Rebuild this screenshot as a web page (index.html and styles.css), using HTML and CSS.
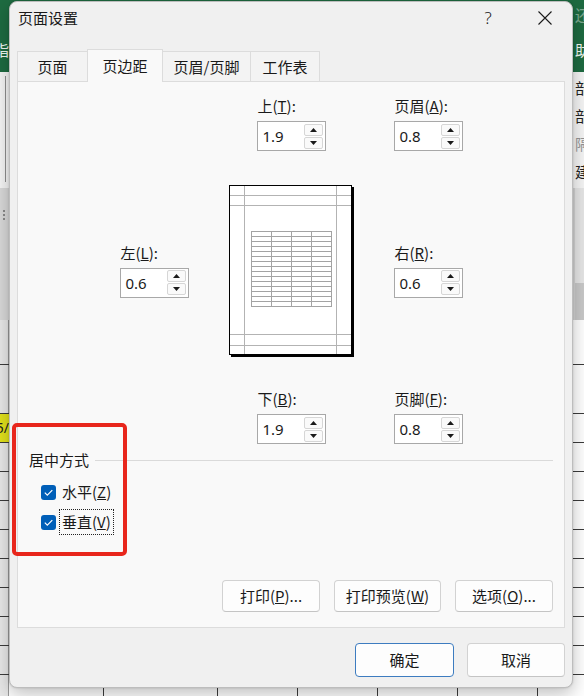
FILE: index.html
```html
<!DOCTYPE html>
<html lang="zh-CN">
<head>
<meta charset="utf-8">
<title>页面设置</title>
<link rel="stylesheet" href="styles.css">
</head>
<body>
<div class="desk">
  <div class="ribbon">
    <div class="edge edge-left"><span>指</span></div>
    <div class="edge edge-right"><span class="faint">还</span><span>助</span></div>
  </div>
  <div class="toolbar">
    <div class="edge edge-left"><div class="tb-line"></div></div>
    <div class="edge edge-right"><span>部</span><span>部</span><span class="faint">隔</span><span>建</span></div>
  </div>
  <div class="pane">
    <div class="edge edge-left"><div class="grip"><i></i><i></i><i></i></div></div>
    <div class="edge edge-right pane-right"></div>
  </div>
  <div class="sheet">
    <div class="row row-head"></div>
    <div class="row row-tall"></div>
    <div class="row row-hl"><div class="hl-cell"><span>5/</span></div></div>
    <div class="row"></div>
    <div class="row"></div>
    <div class="row"></div>
    <div class="row"></div>
    <div class="row"></div>
    <div class="row"></div>
    <div class="row"></div>
    <div class="row"></div>
    <div class="row"></div>
  </div>

  <div class="dialog">
    <div class="titlebar">
      <div class="title">页面设置</div>
      <div class="tb-btns">
        <div class="tb-btn help">?</div>
        <div class="tb-btn">
          <svg width="14" height="14" viewBox="0 0 14 14"><path d="M0.5 0.5L13.5 13.5M13.5 0.5L0.5 13.5" stroke="#1a1a1a" stroke-width="1.1" fill="none"/></svg>
        </div>
      </div>
    </div>

    <div class="tabs">
      <div class="tab tab-first">页面</div>
      <div class="tab tab-active">页边距</div>
      <div class="tab">页眉/页脚</div>
      <div class="tab">工作表</div>
    </div>

    <div class="panel">
      <div class="margins">
        <div class="field m-top">
          <div class="field-label">上(<u>T</u>):</div>
          <div class="spin"><span class="spin-val">1.9</span><span class="spin-btns"><span class="spin-btn"><svg width="7" height="4" viewBox="0 0 7 4"><path d="M0 4L3.5 0L7 4Z" fill="#1a1a1a"/></svg></span><span class="spin-btn"><svg width="7" height="4" viewBox="0 0 7 4"><path d="M0 0L7 0L3.5 4Z" fill="#1a1a1a"/></svg></span></span></div>
        </div>
        <div class="field m-header">
          <div class="field-label">页眉(<u>A</u>):</div>
          <div class="spin"><span class="spin-val">0.8</span><span class="spin-btns"><span class="spin-btn"><svg width="7" height="4" viewBox="0 0 7 4"><path d="M0 4L3.5 0L7 4Z" fill="#1a1a1a"/></svg></span><span class="spin-btn"><svg width="7" height="4" viewBox="0 0 7 4"><path d="M0 0L7 0L3.5 4Z" fill="#1a1a1a"/></svg></span></span></div>
        </div>
        <div class="field m-left">
          <div class="field-label">左(<u>L</u>):</div>
          <div class="spin"><span class="spin-val">0.6</span><span class="spin-btns"><span class="spin-btn"><svg width="7" height="4" viewBox="0 0 7 4"><path d="M0 4L3.5 0L7 4Z" fill="#1a1a1a"/></svg></span><span class="spin-btn"><svg width="7" height="4" viewBox="0 0 7 4"><path d="M0 0L7 0L3.5 4Z" fill="#1a1a1a"/></svg></span></span></div>
        </div>
        <div class="page">
          <svg width="121" height="168" viewBox="0 0 121 168">
            <path d="M14.5 0V168M106.5 0V168M0 9.5H121M0 19.5H121M0 148.5H121M0 159.5H121" stroke="#b3b3b3" stroke-width="1" fill="none"/>
            <path d="M21 45.5h81M21 50.5h81M21 55.5h81M21 60.5h81M21 65.5h81M21 70.5h81M21 75.5h81M21 80.5h81M21 85.5h81M21 90.5h81M21 95.5h81M21 100.5h81M21 105.5h81M21 110.5h81M21 115.5h81M21 120.5h81M21.5 45v76M41.5 45v76M61.5 45v76M81.5 45v76M101.5 45v76" stroke="#a3a3a3" stroke-width="1" fill="none"/>
          </svg>
        </div>
        <div class="field m-right">
          <div class="field-label">右(<u>R</u>):</div>
          <div class="spin"><span class="spin-val">0.6</span><span class="spin-btns"><span class="spin-btn"><svg width="7" height="4" viewBox="0 0 7 4"><path d="M0 4L3.5 0L7 4Z" fill="#1a1a1a"/></svg></span><span class="spin-btn"><svg width="7" height="4" viewBox="0 0 7 4"><path d="M0 0L7 0L3.5 4Z" fill="#1a1a1a"/></svg></span></span></div>
        </div>
        <div class="field m-bottom">
          <div class="field-label">下(<u>B</u>):</div>
          <div class="spin"><span class="spin-val">1.9</span><span class="spin-btns"><span class="spin-btn"><svg width="7" height="4" viewBox="0 0 7 4"><path d="M0 4L3.5 0L7 4Z" fill="#1a1a1a"/></svg></span><span class="spin-btn"><svg width="7" height="4" viewBox="0 0 7 4"><path d="M0 0L7 0L3.5 4Z" fill="#1a1a1a"/></svg></span></span></div>
        </div>
        <div class="field m-footer">
          <div class="field-label">页脚(<u>F</u>):</div>
          <div class="spin"><span class="spin-val">0.8</span><span class="spin-btns"><span class="spin-btn"><svg width="7" height="4" viewBox="0 0 7 4"><path d="M0 4L3.5 0L7 4Z" fill="#1a1a1a"/></svg></span><span class="spin-btn"><svg width="7" height="4" viewBox="0 0 7 4"><path d="M0 0L7 0L3.5 4Z" fill="#1a1a1a"/></svg></span></span></div>
        </div>
      </div>

      <div class="group">
        <div class="legend"><span>居中方式</span><span class="legend-line"></span></div>
        <div class="checks">
          <div class="check">
            <span class="cb"><svg width="15" height="15" viewBox="0 0 15 15"><path d="M3.8 7.6L6.3 10.1L11.3 5.1" stroke="#fff" stroke-width="1.2" fill="none"/></svg></span>
            <span class="check-label">水平(<u>Z</u>)</span>
          </div>
          <div class="check">
            <span class="cb"><svg width="15" height="15" viewBox="0 0 15 15"><path d="M3.8 7.6L6.3 10.1L11.3 5.1" stroke="#fff" stroke-width="1.2" fill="none"/></svg></span>
            <span class="check-label focus">垂直(<u>V</u>)</span>
          </div>
        </div>
      </div>

      <div class="spacer"></div>

      <div class="actions">
        <div class="btn btn-print">打印(<u>P</u>)...</div>
        <div class="btn btn-preview">打印预览(<u>W</u>)</div>
        <div class="btn btn-options">选项(<u>O</u>)...</div>
      </div>
    </div>

    <div class="footer">
      <div class="btn btn-lg btn-default">确定</div>
      <div class="btn btn-lg">取消</div>
    </div>
  </div>

  <div class="annot"></div>
</div>
</body>
</html>
```

FILE: styles.css
```css
* { box-sizing: border-box; }
html, body { margin: 0; padding: 0; }
body {
  width: 584px;
  height: 696px;
  overflow: hidden;
  font-family: "Noto Sans CJK SC", "Noto Sans", sans-serif;
  font-size: 15px;
  line-height: 20px;
  color: #1a1a1a;
}

/* ---------- background spreadsheet ---------- */
.desk {
  position: relative;
  width: 584px;
  height: 696px;
  display: flex;
  flex-direction: column;
  overflow: hidden;
  background: #fff;
}
.edge {
  width: 9px;
  overflow: hidden;
  display: flex;
  flex-direction: column;
}
.edge-left { align-items: flex-end; }
.edge-right { align-items: flex-start; }
.faint { opacity: .45; }

.ribbon {
  height: 72px;
  flex: none;
  background: #1e6b41;
  color: #f2f7f3;
  display: flex;
  justify-content: space-between;
}
.ribbon .edge-left { padding-top: 40px; }
.ribbon .edge-right { padding-top: 5px; gap: 15px; }

.toolbar {
  height: 116px;
  flex: none;
  background: #f5f5f5;
  display: flex;
  justify-content: space-between;
  line-height: 28px;
  color: #222;
}
.toolbar .edge-left { align-items: flex-start; padding: 4px 0 6px 5px; }
.tb-line { width: 1px; height: 100%; background: #8e8e8e; }
.toolbar .edge-right { padding-top: 2px; }

.pane {
  height: 132px;
  flex: none;
  background: #d5d5d5;
  display: flex;
  justify-content: space-between;
}
.pane .edge-left { align-items: flex-start; background: #d9d9d9; }
.grip { display: flex; flex-direction: column; gap: 2px; margin: 22px 0 0 3px; }
.grip i { display: block; width: 2px; height: 2px; background: #8a8a8a; }
.pane-right { background: linear-gradient(#e6e6e6 0 95px, #c9c9c9 95px); }

.sheet {
  flex: 1;
  display: flex;
  flex-direction: column;
  background-color: #fff;
  background-image:
    linear-gradient(#3b3b3b, #3b3b3b),
    linear-gradient(#3b3b3b, #3b3b3b),
    linear-gradient(#3b3b3b, #3b3b3b),
    linear-gradient(#3b3b3b, #3b3b3b),
    linear-gradient(#3b3b3b, #3b3b3b),
    linear-gradient(#3b3b3b, #3b3b3b),
    linear-gradient(#9a9a9a, #9a9a9a),
    linear-gradient(#e8e8e8, #e8e8e8);
  background-size: 1px 100%, 1px 100%, 1px 100%, 1px 100%, 1px 100%, 1px 100%, 1px 100%, 8px 100%;
  background-position: 103px 0, 217px 0, 297px 0, 377px 0, 457px 0, 537px 0, 8px 0, 0 0;
  background-repeat: no-repeat;
}
.row { height: 29px; flex: none; border-bottom: 1px solid #3b3b3b; }
.row-head { height: 45px; }
.row-tall { height: 49px; }
.row-hl { display: flex; }
.hl-cell {
  width: 9px;
  background: #e2e21c;
  overflow: hidden;
  display: flex;
  justify-content: flex-end;
  font-family: "Noto Sans", sans-serif;
  font-size: 14px;
  line-height: 28px;
  color: #222;
}

/* ---------- dialog ---------- */
.dialog {
  position: absolute;
  left: 9px;
  top: 1px;
  width: 564px;
  height: 687px;
  background: #f0f0f0;
  border: 1px solid #bdbdbd;
  border-radius: 8px;
  box-shadow: 0 6px 18px rgba(0, 0, 0, .25), 0 0 2px rgba(0, 0, 0, .18);
  padding: 0 7px 10px;
  display: flex;
  flex-direction: column;
  z-index: 5;
}

.titlebar {
  height: 47px;
  flex: none;
  display: flex;
  align-items: flex-start;
  padding-top: 6px;
}
.title { flex: 1; margin-left: 1px; }
.tb-btns { display: flex; gap: 17px; }
.tb-btn {
  width: 40px;
  height: 20px;
  display: flex;
  align-items: center;
  justify-content: center;
}
.help { font-family: "Noto Sans", sans-serif; font-size: 17px; font-weight: 300; }

.tabs {
  height: 32px;
  flex: none;
  display: grid;
  grid-template-columns: 71px 75px 88px 69px;
  align-items: end;
}
.tab {
  height: 30px;
  background: #f3f3f3;
  border: 1px solid #dcdcdc;
  border-bottom: none;
  margin-left: -1px;
  display: flex;
  align-items: center;
  justify-content: center;
}
.tab-first { margin-left: 0; }
.tab-active {
  height: 33px;
  margin-bottom: -1px;
  background: #f9f9f9;
  position: relative;
  z-index: 2;
  padding-bottom: 1px;
}

.panel {
  height: 547px;
  flex: none;
  background: #f9f9f9;
  border: 1px solid #dcdcdc;
  padding: 14px 11px 15px;
  display: flex;
  flex-direction: column;
}

.margins {
  display: grid;
  grid-template-columns: 69px 125px 69px;
  grid-template-rows: auto 170px auto;
  column-gap: 40px;
  row-gap: 34px;
  justify-content: center;
}
.field { width: 69px; display: flex; flex-direction: column; gap: 5px; }
.field-label { padding-left: 1px; white-space: nowrap; }
.m-top { grid-column: 2; grid-row: 1; justify-self: center; }
.m-header { grid-column: 3; grid-row: 1; }
.m-left { grid-column: 1; grid-row: 2; align-self: center; }
.m-right { grid-column: 3; grid-row: 2; align-self: center; }
.m-bottom { grid-column: 2; grid-row: 3; justify-self: center; }
.m-footer { grid-column: 3; grid-row: 3; }

.page {
  grid-column: 2;
  grid-row: 2;
  width: 123px;
  height: 170px;
  border: 1px solid #000;
  background: #fff;
  box-shadow: 2px 2px 0 #000;
}
.page svg { display: block; shape-rendering: crispEdges; }

.spin {
  width: 69px;
  height: 30px;
  border: 1px solid #a8a8a8;
  background: #fff;
  display: flex;
  align-items: center;
  padding: 0 2px 0 5px;
}
.spin-val { flex: 1; font-family: "Noto Sans", sans-serif; font-size: 15px; }
.spin-btns { display: flex; flex-direction: column; gap: 1px; }
.spin-btn {
  width: 19px;
  height: 12px;
  border: 1px solid #d6d6d6;
  border-radius: 2px;
  background: #fafafa;
  display: flex;
  align-items: center;
  justify-content: center;
}
.spin-btn svg { display: block; }

.group { margin-top: 6px; }
.legend { display: flex; align-items: center; gap: 6px; }
.legend-line { flex: 1; height: 1px; background: #dadada; }
.checks { padding-left: 12px; margin-top: 7px; }
.check { height: 30px; display: flex; align-items: center; }
.cb {
  width: 15px;
  height: 15px;
  border-radius: 3px;
  background: #005fb8;
  margin-right: 6px;
  flex: none;
}
.cb svg { display: block; }
.focus { outline: 1px dotted #222; margin-left: -2px; padding: 2px; }

.spacer { flex: 1; }

.actions { display: flex; justify-content: flex-end; gap: 14px; }
.btn {
  height: 32px;
  border: 1px solid #d2d2d2;
  border-bottom-color: #c4c4c4;
  border-radius: 4px;
  background: #fdfdfd;
  display: flex;
  align-items: center;
  justify-content: center;
  white-space: nowrap;
}
.btn-print { width: 98px; }
.btn-preview { width: 107px; }
.btn-options { width: 98px; }

.footer {
  flex: none;
  display: flex;
  justify-content: flex-end;
  gap: 13px;
  padding-top: 15px;
}
.btn-lg { height: 34px; width: 98px; }
.btn-default { width: 99px; border-color: #3d7cc0; }

/* ---------- red annotation ---------- */
.annot {
  position: absolute;
  left: 12px;
  top: 423px;
  width: 115px;
  height: 133px;
  border: 4px solid #e8261c;
  border-radius: 5px;
  z-index: 10;
}
```
